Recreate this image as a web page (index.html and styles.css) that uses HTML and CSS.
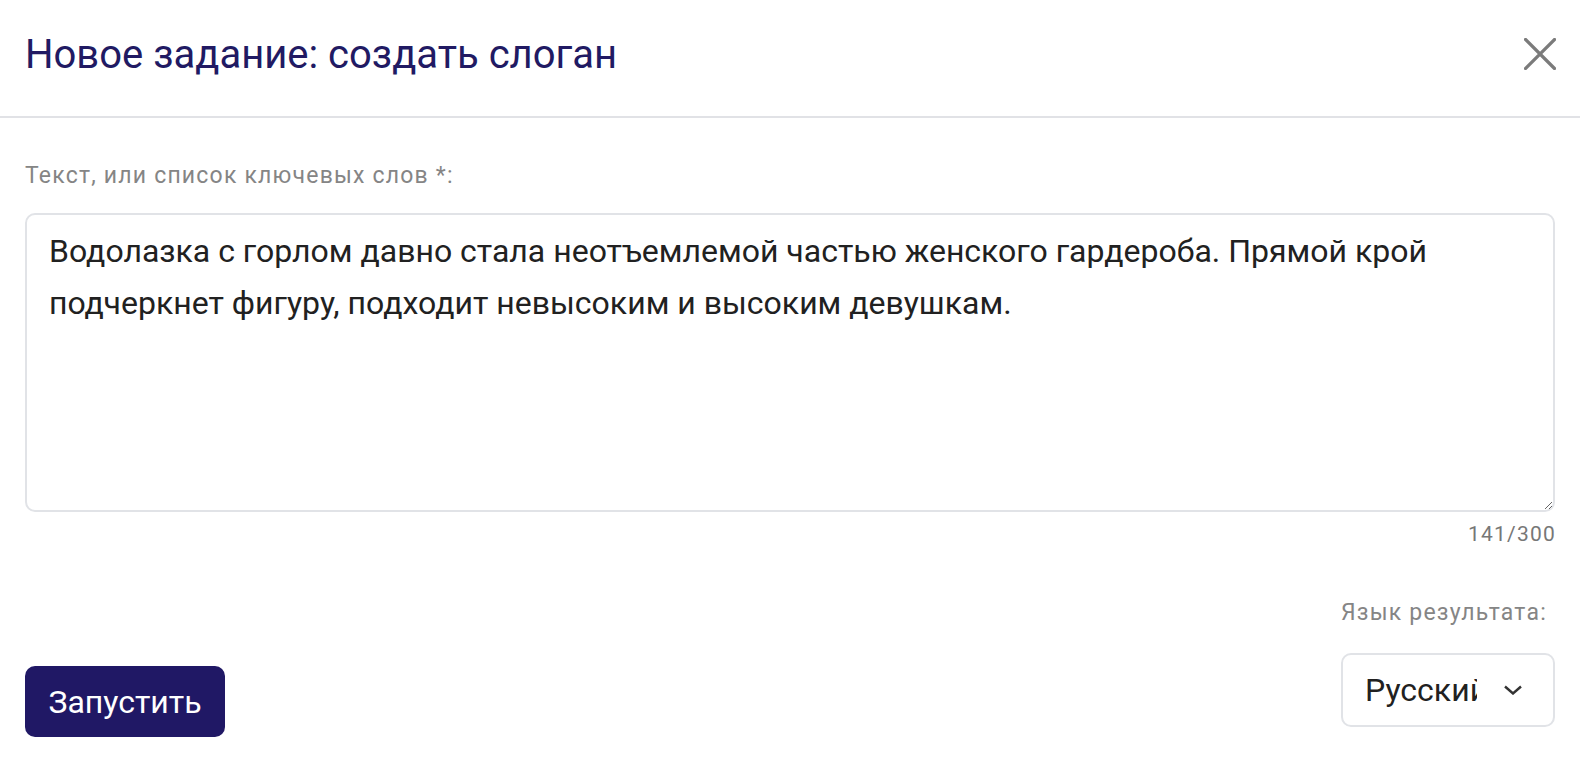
FILE: index.html
```html
<!doctype html>
<html lang="ru">
<head>
<title>Новое задание: создать слоган</title>
<meta charset="utf-8">
<meta name="viewport" content="width=device-width, initial-scale=1">
<link rel="stylesheet" href="styles.css">
</head>
<body>

<div id="dialog">

	<div id="head">
		<h1>Новое задание: создать слоган</h1>
		<button id="closeBtn" aria-label="Закрыть">
			<svg width="32" height="32" viewBox="0 0 32 32">
				<path d="M1.5 1.5 L30.5 30.5 M30.5 1.5 L1.5 30.5" stroke="#7b7b7b" stroke-width="3.2" stroke-linecap="square" fill="none"/>
			</svg>
		</button>
	</div>

	<div id="body">
		<label class="fieldLabel" for="srcText">Текст, или список ключевых слов *:</label>
		<textarea id="srcText">Водолазка с горлом давно стала неотъемлемой частью женского гардероба. Прямой крой подчеркнет фигуру, подходит невысоким и высоким девушкам.</textarea>
		<div id="counter">141/300</div>

		<div id="actions">
			<button id="runBtn">Запустить</button>

			<div id="langBox">
				<div class="fieldLabel">Язык результата:</div>
				<div id="langSelect">
					<span class="value">Русский</span>
					<svg width="20" height="10" viewBox="0 0 20 10">
						<path d="M2 1.5 L10 8.5 L18 1.5" stroke="#333" stroke-width="2.4" fill="none"/>
					</svg>
				</div>
			</div>
		</div>
	</div>

</div>

</body>
</html>
```

FILE: styles.css
```css
* { margin: 0; padding: 0; box-sizing: border-box; }
html, body { height: 100%; background: #fff; }

body {
	font-family: Roboto, "Liberation Sans", sans-serif;
	color: #212121;
}

#head {
	height: 118px;
	padding: 0 24px 8px 25px;
	display: flex;
	align-items: center;
	justify-content: space-between;
	border-bottom: 2px solid #e1e2e6;
}
#head > h1 {
	font-size: 40px;
	font-weight: 400;
	color: #211a63;
}
#closeBtn {
	border: none;
	background: none;
	width: 32px; height: 32px;
	display: block;
}
#closeBtn svg { display: block; }

#body {
	padding: 45px 25px 0 25px;
}

.fieldLabel {
	display: block;
	font-size: 23px;
	line-height: 26px;
	letter-spacing: 1.2px;
	color: #858585;
}

#srcText {
	display: block;
	width: 100%;
	height: 299px;
	margin-top: 24px;
	padding: 10px 22px;
	border: 2px solid #e1e3e7;
	border-radius: 10px;
	font-family: Roboto, "Liberation Sans", sans-serif;
	font-size: 32px;
	line-height: 52px;
	color: #212121;
	resize: vertical;
	outline: none;
}

#counter {
	margin-top: 10px;
	margin-right: -1px;
	text-align: right;
	font-size: 21px;
	line-height: 24px;
	letter-spacing: 1.2px;
	color: #777;
}

#actions {
	margin-top: 54px;
	display: flex;
	justify-content: space-between;
	align-items: flex-end;
}

#runBtn {
	width: 200px;
	height: 71px;
	border: none;
	border-radius: 10px;
	background: #201865;
	color: #fff;
	font-family: Roboto, "Liberation Sans", sans-serif;
	font-size: 32px;
	font-weight: 400;
	margin-bottom: -10px;
}

#langBox {
	width: 214px;
}

#langSelect {
	margin-top: 27px;
	height: 74px;
	border: 2px solid #e1e3e7;
	border-radius: 10px;
	padding: 0 0 0 22px;
	display: flex;
	align-items: center;
	gap: 26px;
}
#langSelect > .value {
	width: 112px;
	overflow: hidden;
	white-space: nowrap;
	font-size: 32px;
	color: #212121;
}
#langSelect > svg { display: block; }
```
